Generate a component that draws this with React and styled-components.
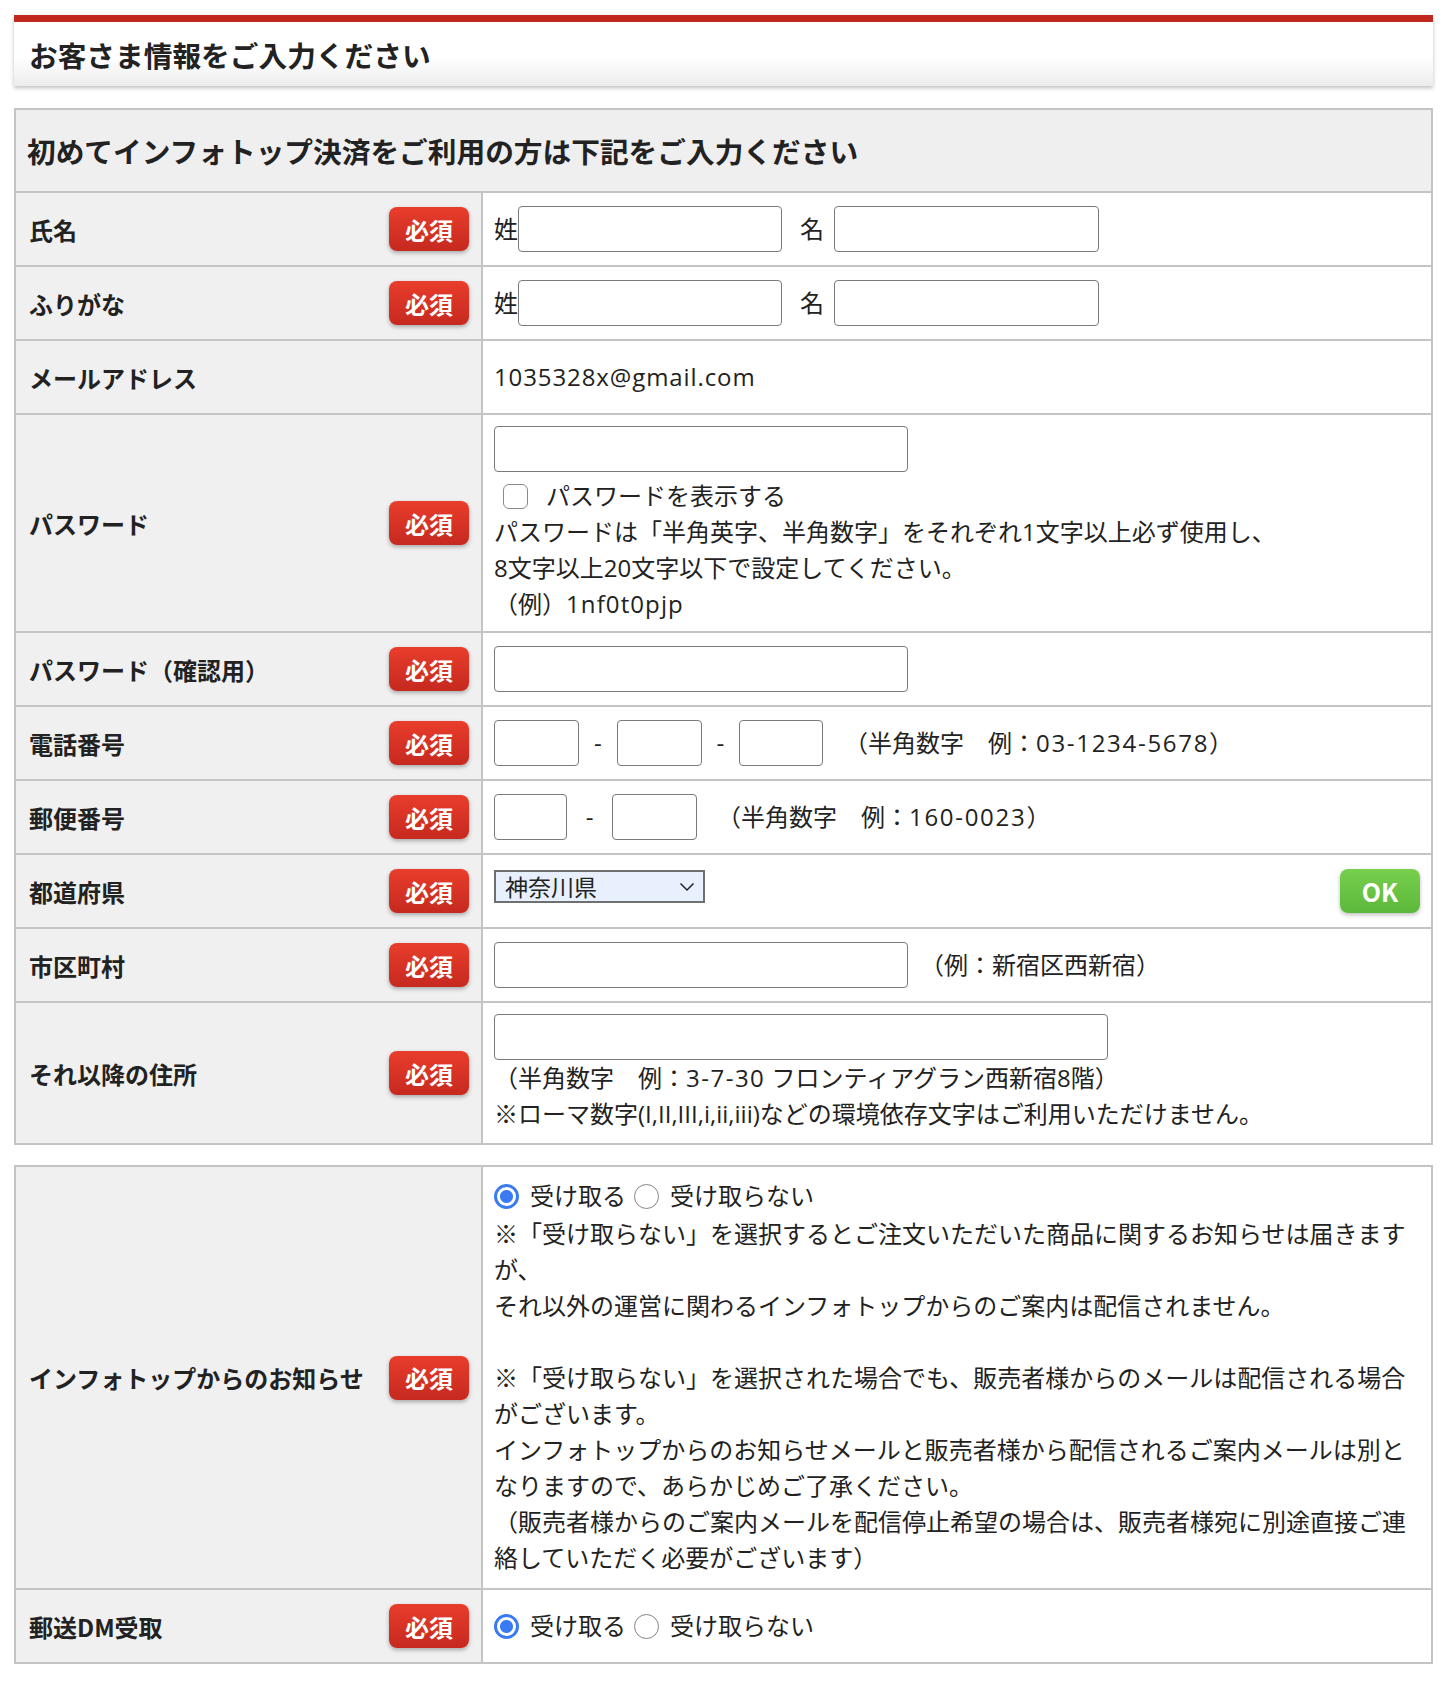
import React from 'react';
import styled, { createGlobalStyle } from 'styled-components';

const GlobalStyle = createGlobalStyle`
  body {
    margin: 0;
    background: #fff;
    color: #222;
    font-family: "Noto Sans CJK JP", "Noto Sans", sans-serif;
  }
`;

const Page = styled.div`
  width: 1419px;
  padding: 15px 0 20px 14px;
`;

const PageHeader = styled.h1`
  margin: 0;
  height: 64px;
  border-top: 7px solid #c1281f;
  background: linear-gradient(#fff 0%, #fff 55%, #ececec 100%);
  box-shadow: 0 2px 4px rgba(0, 0, 0, 0.25);
  display: flex;
  align-items: center;
  padding-left: 15px;
  font-size: 28.7px;
  font-weight: 700;
  color: #222;
`;

const FormTable = styled.table`
  width: 100%;
  margin-top: ${p => p.$gap}px;
  border-collapse: collapse;
  table-layout: fixed;
  border: 2px solid #c4c4c4;
`;

const Row = styled.tr`
  height: ${p => p.$h || 74}px;
`;

const CaptionCell = styled.th`
  background: #efefef;
  border: 2px solid #c4c4c4;
  padding: 0 11px;
  text-align: left;
  font-size: 28.7px;
  font-weight: 700;
  color: #222;
`;

const LabelCell = styled.th`
  background: #f0f0f0;
  border: 2px solid #c4c4c4;
  padding: 0 12px 0 13px;
  text-align: left;
  vertical-align: middle;
`;

const LabelInner = styled.div`
  display: flex;
  align-items: center;
  justify-content: space-between;
`;

const LabelText = styled.span`
  font-size: 24px;
  font-weight: 700;
  color: #222;
`;

const Badge = styled.span`
  flex-shrink: 0;
  width: 80px;
  height: 44px;
  border-radius: 8px;
  background: linear-gradient(#e83d2c, #c6291f);
  box-shadow: 0 2px 4px rgba(0, 0, 0, 0.3);
  color: #fff;
  font-size: 24px;
  font-weight: 700;
  display: flex;
  align-items: center;
  justify-content: center;
`;

const ValueCell = styled.td`
  background: #fff;
  border: 2px solid #c4c4c4;
  padding: ${p => p.$pad || '0 11px'};
  vertical-align: middle;
  font-family: "Open Sans", "Noto Sans CJK JP", sans-serif;
  font-size: 24px;
  line-height: 36px;
  color: #222;
`;

// half-width runs are a little wider in the original font
const Latin = styled.span`
  letter-spacing: ${p => p.$ls || 1}px;
`;

const Line = styled.div`
  min-height: 36px;
`;

const Fields = styled.div`
  display: flex;
  align-items: ${p => p.$align || 'center'};
`;

const TextInput = styled.input`
  box-sizing: border-box;
  width: ${p => p.$w}px;
  height: 46px;
  margin: 0;
  border: 1.5px solid #7a7a7a;
  border-radius: 4px;
  background: #fff;
  font: inherit;
  padding: 0 8px;
  flex-shrink: 0;
`;

const Sep = styled.span`
  width: ${p => p.$w}px;
  text-align: center;
  flex-shrink: 0;
`;

const Prefix = styled.span`
  margin-left: ${p => p.$ml || 0}px;
  margin-right: ${p => p.$mr || 0}px;
`;

const Note = styled.span`
  margin-left: ${p => p.$ml}px;
  white-space: nowrap;
`;

const CheckRow = styled.label`
  display: flex;
  align-items: center;
  height: 36px;
  margin-top: 6px;
`;

const CheckBox = styled.input`
  appearance: none;
  box-sizing: border-box;
  width: 25px;
  height: 25px;
  margin: 0 18px 0 9px;
  border: 1.5px solid #8a8a8a;
  border-radius: 6px;
  background: #fff;
`;

const RadioGroup = styled.div`
  display: flex;
  align-items: center;
  height: ${p => p.$h || 36}px;
`;

const RadioLabel = styled.label`
  display: flex;
  align-items: center;
  margin-right: 8px;
`;

const Radio = styled.input`
  appearance: none;
  box-sizing: border-box;
  width: 25px;
  height: 25px;
  margin: 0 11px 0 0;
  border-radius: 50%;
  border: 1.5px solid #858585;
  background: #fff;

  &:checked {
    border: 3px solid #3a7bf3;
    background: radial-gradient(circle, #3a7bf3 0 6px, #fff 7px);
  }
`;

const SelectWrap = styled.div`
  position: relative;
  width: 211px;
  height: 33px;
`;

const Select = styled.select`
  appearance: none;
  box-sizing: border-box;
  width: 100%;
  height: 100%;
  margin: 0;
  border: 2px solid #6f6f6f;
  border-radius: 0;
  background: #e8f0fe;
  color: #222;
  font-family: "Noto Sans CJK JP", sans-serif;
  font-size: 23px;
  line-height: 29px;
  padding: 0 0 0 9px;
`;

const Chevron = styled.svg`
  position: absolute;
  right: 10px;
  top: 13px;
  pointer-events: none;
`;

const OkButton = styled.button`
  margin-left: auto;
  width: 80px;
  height: 44px;
  border: none;
  border-radius: 8px;
  background: linear-gradient(#78cf4d, #5cb83a);
  box-shadow: 0 2px 4px rgba(0, 0, 0, 0.25);
  color: #fff;
  font-family: "Noto Sans CJK JP", sans-serif;
  font-size: 25px;
  font-weight: 700;
`;

const Field = ({ label, required = true, h, pad, children }) => (
  <Row $h={h}>
    <LabelCell>
      <LabelInner>
        <LabelText>{label}</LabelText>
        {required && <Badge>必須</Badge>}
      </LabelInner>
    </LabelCell>
    <ValueCell $pad={pad}>{children}</ValueCell>
  </Row>
);

const Radios = ({ name, h }) => (
  <RadioGroup $h={h}>
    <RadioLabel>
      <Radio type="radio" name={name} defaultChecked />
      <span>受け取る</span>
    </RadioLabel>
    <RadioLabel>
      <Radio type="radio" name={name} />
      <span>受け取らない</span>
    </RadioLabel>
  </RadioGroup>
);

const Cols = () => (
  <colgroup>
    <col style={{ width: 467 }} />
    <col />
  </colgroup>
);

const App = () => {
  return (
    <Page>
      <GlobalStyle />
      <PageHeader>お客さま情報をご入力ください</PageHeader>

      <FormTable $gap={22}>
        <Cols />
        <tbody>
          <Row $h={83}>
            <CaptionCell colSpan={2}>初めてインフォトップ決済をご利用の方は下記をご入力ください</CaptionCell>
          </Row>
          <Field label="氏名">
            <Fields>
              <Prefix>姓</Prefix>
              <TextInput $w={264} type="text" />
              <Prefix $ml={18} $mr={10}>名</Prefix>
              <TextInput $w={265} type="text" />
            </Fields>
          </Field>
          <Field label="ふりがな">
            <Fields>
              <Prefix>姓</Prefix>
              <TextInput $w={264} type="text" />
              <Prefix $ml={18} $mr={10}>名</Prefix>
              <TextInput $w={265} type="text" />
            </Fields>
          </Field>
          <Field label="メールアドレス" required={false}>
            <Latin $ls={0.9}>1035328x@gmail.com</Latin>
          </Field>
          <Field label="パスワード" h={216} pad="11px 11px 9px">
            <TextInput $w={414} type="password" />
            <CheckRow>
              <CheckBox type="checkbox" />
              <span>パスワードを表示する</span>
            </CheckRow>
            <Line>パスワードは「半角英字、半角数字」をそれぞれ1文字以上必ず使用し、</Line>
            <Line>8文字以上20文字以下で設定してください。</Line>
            <Line>（例）<Latin $ls={1.1}>1nf0t0pjp</Latin></Line>
          </Field>
          <Field label="パスワード（確認用）">
            <TextInput $w={414} type="password" />
          </Field>
          <Field label="電話番号">
            <Fields>
              <TextInput $w={85} type="tel" />
              <Sep $w={37.5}>-</Sep>
              <TextInput $w={85} type="tel" />
              <Sep $w={37.5}>-</Sep>
              <TextInput $w={84} type="tel" />
              <Note $ml={21}>（半角数字　例：<Latin $ls={1.7}>03-1234-5678</Latin>）</Note>
            </Fields>
          </Field>
          <Field label="郵便番号">
            <Fields>
              <TextInput $w={73} type="tel" />
              <Sep $w={45}>-</Sep>
              <TextInput $w={85} type="tel" />
              <Note $ml={20}>（半角数字　例：<Latin $ls={1.7}>160-0023</Latin>）</Note>
            </Fields>
          </Field>
          <Field label="都道府県">
            <Fields $align="flex-start">
              <SelectWrap>
                <Select defaultValue="神奈川県">
                  <option>東京都</option>
                  <option>神奈川県</option>
                  <option>千葉県</option>
                  <option>埼玉県</option>
                </Select>
                <Chevron width="16" height="10" viewBox="0 0 16 10">
                  <path d="M1.5 1.5 L8 8 L14.5 1.5" fill="none" stroke="#222" strokeWidth="1.5" />
                </Chevron>
              </SelectWrap>
              <OkButton type="button">OK</OkButton>
            </Fields>
          </Field>
          <Field label="市区町村">
            <Fields>
              <TextInput $w={414} type="text" />
              <Note $ml={12}>（例：新宿区西新宿）</Note>
            </Fields>
          </Field>
          <Field label="それ以降の住所" h={140} pad="11px 11px 11px">
            <TextInput $w={614} type="text" />
            <Line>（半角数字　例：<Latin $ls={1.5}>3-7-30</Latin> フロンティアグラン西新宿8階）</Line>
            <Line>※ローマ数字(I,II,III,i,ii,iii)などの環境依存文字はご利用いただけません。</Line>
          </Field>
        </tbody>
      </FormTable>

      <FormTable $gap={20}>
        <Cols />
        <tbody>
          <Field label="インフォトップからのお知らせ" h={420} pad="9px 11px 12px">
            <Radios name="news" h={40} />
            <Line>※「受け取らない」を選択するとご注文いただいた商品に関するお知らせは届きますが、</Line>
            <Line>それ以外の運営に関わるインフォトップからのご案内は配信されません。</Line>
            <Line />
            <Line>※「受け取らない」を選択された場合でも、販売者様からのメールは配信される場合がございます。</Line>
            <Line>インフォトップからのお知らせメールと販売者様から配信されるご案内メールは別となりますので、あらかじめご了承ください。</Line>
            <Line>（販売者様からのご案内メールを配信停止希望の場合は、販売者様宛に別途直接ご連絡していただく必要がございます）</Line>
          </Field>
          <Field label="郵送DM受取">
            <Radios name="dm" />
          </Field>
        </tbody>
      </FormTable>
    </Page>
  );
};

export default App;
